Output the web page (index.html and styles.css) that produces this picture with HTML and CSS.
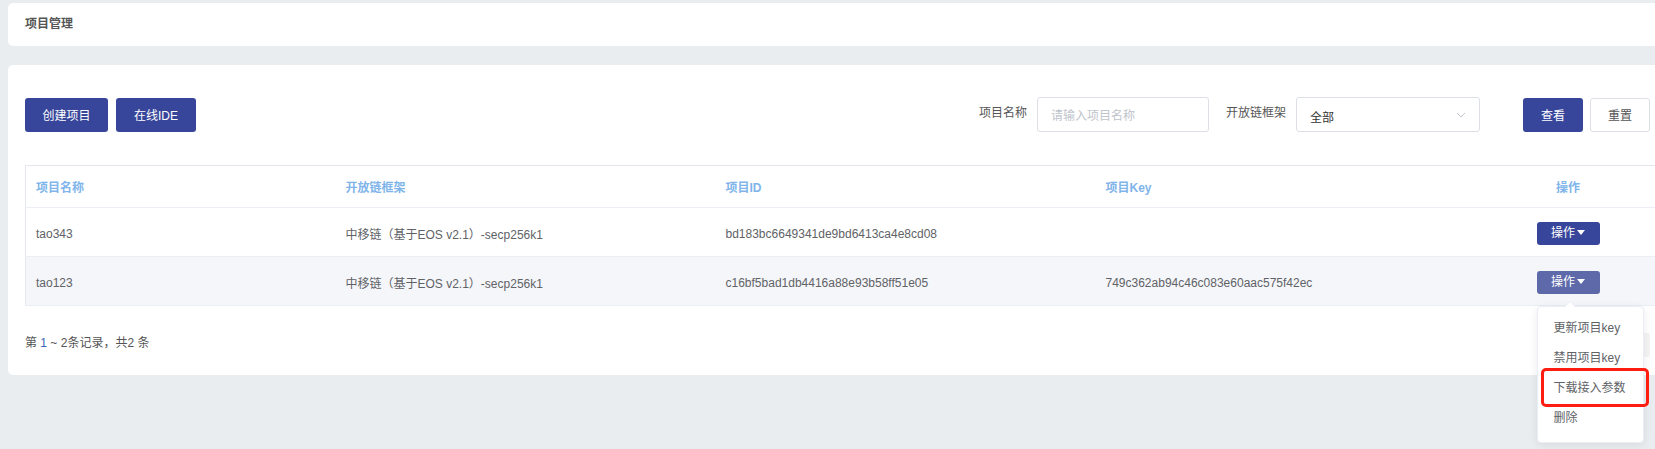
FILE: index.html
```html
<!doctype html>
<html lang="zh-CN">
  <head>
    <meta charset="UTF-8" />
    <title>项目管理</title>
    <link rel="stylesheet" href="styles.css">
  </head>
  <body>
    <div class="page">
      <div class="card title-card">项目管理</div>

      <div class="card main-card">
        <div class="toolbar">
          <div class="actions">
            <button class="btn primary">创建项目</button>
            <button class="btn primary">在线IDE</button>
          </div>
          <div class="search">
            <label class="field-label">项目名称</label>
            <div class="input placeholder">请输入项目名称</div>
            <label class="field-label">开放链框架</label>
            <div class="input select">
              <span>全部</span>
              <svg width="10" height="6" viewBox="0 0 10 6"><path d="M1 1l4 4 4-4" fill="none" stroke="#c0c4cc" stroke-width="1"/></svg>
            </div>
            <button class="btn primary query">查看</button>
            <button class="btn plain">重置</button>
          </div>
        </div>

        <table class="grid">
          <colgroup>
            <col style="width: 310px">
            <col style="width: 380px">
            <col style="width: 380px">
            <col style="width: 375px">
            <col style="width: 195px">
          </colgroup>
          <thead>
            <tr>
              <th>项目名称</th>
              <th>开放链框架</th>
              <th>项目ID</th>
              <th>项目Key</th>
              <th class="center">操作</th>
            </tr>
          </thead>
          <tbody>
            <tr>
              <td>tao343</td>
              <td>中移链（基于EOS v2.1）-secp256k1</td>
              <td>bd183bc6649341de9bd6413ca4e8cd08</td>
              <td></td>
              <td class="op-cell"><span class="op-btn">操作<i class="caret"></i></span></td>
            </tr>
            <tr class="hover">
              <td>tao123</td>
              <td>中移链（基于EOS v2.1）-secp256k1</td>
              <td>c16bf5bad1db4416a88e93b58ff51e05</td>
              <td>749c362ab94c46c083e60aac575f42ec</td>
              <td class="op-cell">
                <span class="op-wrap">
                  <span class="op-btn active">操作<i class="caret"></i></span>
                  <ul class="menu">
                    <li>更新项目key</li>
                    <li>禁用项目key</li>
                    <li class="marked">下载接入参数<span class="mark"></span></li>
                    <li>删除</li>
                  </ul>
                </span>
              </td>
            </tr>
          </tbody>
        </table>

        <div class="pager">
          <span>第 <em>1</em> ~ 2条记录，共2 条</span>
          <span class="page-box"></span>
        </div>
      </div>
    </div>
  </body>
</html>
```

FILE: styles.css
```css
html,
body {
  margin: 0;
  height: 100%;
}
body {
  background-color: #e9edf0;
  font-family: "Liberation Sans", "Noto Sans CJK SC", sans-serif;
  font-size: 12px;
  color: #606266;
}
.page {
  width: 100%;
  height: 449px;
  overflow: hidden;
  padding: 3px 0 0 8px;
  box-sizing: border-box;
}
.card {
  background: white;
  border-radius: 5px;
  width: 1659px;
  box-sizing: border-box;
}
.title-card {
  height: 43px;
  line-height: 43px;
  padding-left: 17px;
  font-size: 12px;
  font-weight: bold;
  color: #555;
}
.main-card {
  margin-top: 19px;
  padding: 32px 17px 0 17px;
  height: 310px;
}
.toolbar {
  display: flex;
  justify-content: space-between;
  align-items: center;
  height: 35px;
}
.actions {
  display: flex;
  gap: 8px;
}
.btn {
  height: 34px;
  border: none;
  border-radius: 3px;
  font-family: inherit;
  font-size: 12px;
  padding: 0;
  cursor: pointer;
}
.btn.primary {
  background-color: #37459a;
  color: white;
  width: 83px;
}
.actions .btn.primary + .btn.primary {
  width: 80px;
}
.btn.plain {
  background: white;
  border: 1px solid #dcdfe6;
  color: #555;
  width: 60px;
}
.search {
  display: flex;
  align-items: center;
}
.field-label {
  color: #555;
  margin-right: 10px;
  margin-top: -6px;
}
.input {
  width: 172px;
  height: 35px;
  box-sizing: border-box;
  border: 1px solid #dcdfe6;
  border-radius: 3px;
  padding: 0 13px;
  display: flex;
  align-items: center;
  margin-right: 17px;
}
.placeholder {
  color: #c0c4cc;
}
.select {
  width: 184px;
  justify-content: space-between;
  color: #333;
  margin-right: 43px;
}
.select span {
  margin-top: 4px;
}
.btn.query {
  width: 60px;
  margin-right: 7px;
}
.grid {
  margin-top: 33px;
  width: 1640px;
  table-layout: fixed;
  border-collapse: collapse;
  border: 1px solid #e4e7ed;
  border-right: none;
}
.grid th {
  height: 41px;
  text-align: left;
  padding: 0 10px;
  color: #80b4ea;
  font-weight: bold;
  border-bottom: 1px solid #ebeef5;
}
.grid td {
  height: 45px;
  padding: 3px 10px 0;
  border-bottom: 1px solid #ebeef5;
  color: #606266;
}
.grid .center,
.grid .op-cell {
  text-align: center;
}
.grid tr.hover td {
  background-color: #f5f6fa;
}
.op-wrap {
  position: relative;
  display: inline-block;
}
.op-btn {
  display: inline-block;
  width: 63px;
  height: 23px;
  line-height: 23px;
  border-radius: 3px;
  background-color: #37459a;
  color: white;
}
.op-btn.active {
  background-color: #5d69a9;
}
.caret {
  display: inline-block;
  width: 0;
  height: 0;
  border-left: 4px solid transparent;
  border-right: 4px solid transparent;
  border-top: 5px solid white;
  margin-left: 2px;
  vertical-align: 2px;
}
.menu {
  position: absolute;
  left: 0;
  top: 35px;
  width: 105px;
  margin: 0;
  padding: 6px 0 9px;
  list-style: none;
  background: white;
  border: 1px solid #ebeef5;
  border-radius: 4px;
  box-shadow: 0 2px 10px rgba(0, 0, 0, 0.08);
  text-align: left;
  z-index: 5;
}
.menu::before {
  content: "";
  position: absolute;
  top: -6px;
  left: 26px;
  border-left: 6px solid transparent;
  border-right: 6px solid transparent;
  border-bottom: 6px solid #ebeef5;
}
.menu::after {
  content: "";
  position: absolute;
  top: -5px;
  left: 27px;
  border-left: 5px solid transparent;
  border-right: 5px solid transparent;
  border-bottom: 5px solid white;
}
.menu li {
  position: relative;
  height: 30px;
  line-height: 30px;
  padding-left: 16px;
  color: #606266;
  font-size: 12px;
}
.mark {
  position: absolute;
  left: 3px;
  right: -6px;
  top: -5px;
  bottom: -4px;
  border: 3px solid #fe1d10;
  border-radius: 5px;
}
.pager {
  display: flex;
  justify-content: space-between;
  align-items: center;
  margin-top: 23px;
  height: 24px;
  color: #555;
}
.pager em {
  font-style: normal;
  color: #3a66b5;
}
.page-box {
  width: 30px;
  height: 24px;
  margin-top: 8px;
  background-color: #f4f4f5;
  border-radius: 2px;
}
```
